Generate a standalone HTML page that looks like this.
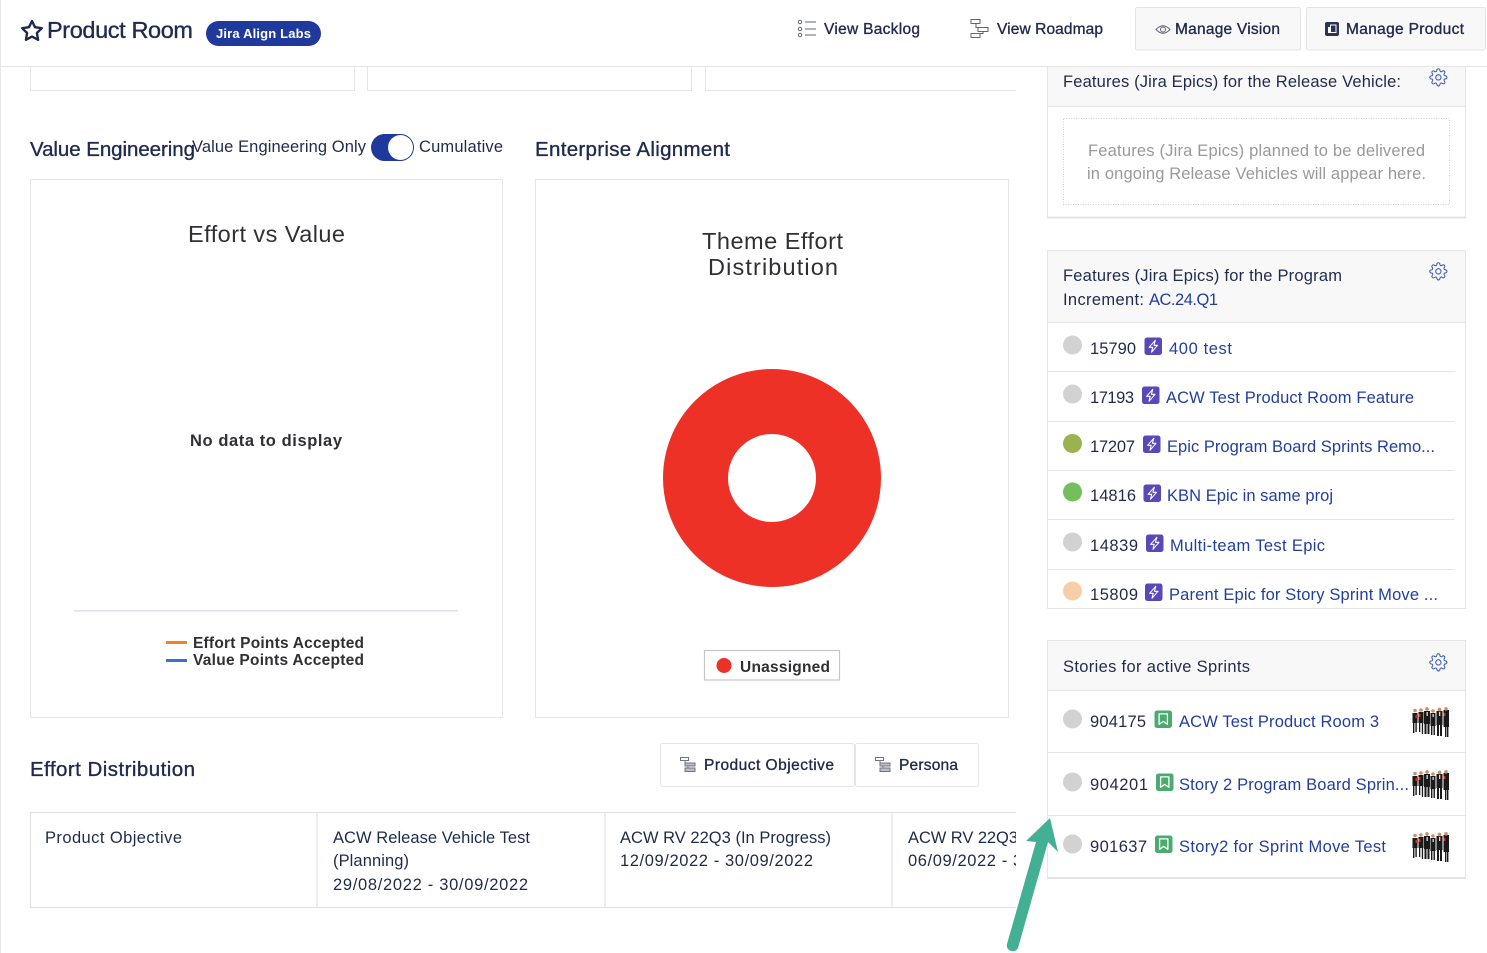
<!DOCTYPE html>
<html lang="en"><head><meta charset="utf-8"><title>Product Room</title>
<style>
html,body{margin:0;padding:0;background:#fff;width:1487px;height:953px;overflow:hidden}
svg{display:block}
text{font-family:"Liberation Sans",sans-serif;font-size:16.5px;fill:#1f2b4d;white-space:pre}
.l{fill:#213f9e}
.m{stroke:#1f2b4d;stroke-width:.35px}
.c{fill:#2f3033}
.b{font-weight:bold;fill:#2f3033;font-size:15px}
.g{fill:#999}
.ln{stroke:#e6e6e6;stroke-width:1;fill:none}
</style></head><body>
<svg xmlns="http://www.w3.org/2000/svg" width="1487" height="953" viewBox="0 0 1487 953">
<defs>
<g id="gear" fill="none" stroke="#3f5db5" stroke-width="1.35" transform="scale(.78)">
<circle cx="12" cy="12" r="3.4"/>
<path d="M19.4 15a1.65 1.65 0 0 0 .33 1.82l.06.06a2 2 0 0 1 0 2.83 2 2 0 0 1-2.83 0l-.06-.06a1.65 1.65 0 0 0-1.82-.33 1.65 1.65 0 0 0-1 1.51V21a2 2 0 0 1-2 2 2 2 0 0 1-2-2v-.09A1.65 1.65 0 0 0 9 19.4a1.65 1.65 0 0 0-1.82.33l-.06.06a2 2 0 0 1-2.83 0 2 2 0 0 1 0-2.83l.06-.06a1.65 1.65 0 0 0 .33-1.82 1.65 1.65 0 0 0-1.51-1H3a2 2 0 0 1-2-2 2 2 0 0 1 2-2h.09A1.65 1.65 0 0 0 4.6 9a1.65 1.65 0 0 0-.33-1.82l-.06-.06a2 2 0 0 1 0-2.83 2 2 0 0 1 2.83 0l.06.06a1.65 1.65 0 0 0 1.82.33H9a1.65 1.65 0 0 0 1-1.51V3a2 2 0 0 1 2-2 2 2 0 0 1 2 2v.09a1.65 1.65 0 0 0 1 1.51 1.65 1.65 0 0 0 1.82-.33l.06-.06a2 2 0 0 1 2.83 0 2 2 0 0 1 0 2.83l-.06.06a1.65 1.65 0 0 0-.33 1.82V9a1.65 1.65 0 0 0 1.51 1H21a2 2 0 0 1 2 2 2 2 0 0 1-2 2h-.09a1.65 1.65 0 0 0-1.51 1z"/>
</g>
<g id="epic"><rect width="17.5" height="17.5" rx="2.5" fill="#5a47b8"/><path d="M10.8 2.8 4.6 9.8h3.6L7 14.8 13 7.8H9.4z" fill="none" stroke="#fff" stroke-width="1.05" stroke-linejoin="round"/></g>
<g id="story"><rect width="17.5" height="17.5" rx="2.5" fill="#4bab6e"/><path d="M4.6 3.4h8.3v10.4l-4.15-2.9-4.15 2.9z" fill="none" stroke="#fff" stroke-width="1.3" stroke-linejoin="round"/></g>
<g id="hier" fill="none" stroke="#6f7686" stroke-width="1"><rect x=".5" y=".5" width="8" height="3" fill="#fff"/><path d="M5 3.5v4M5 7.5h3M5 12.5h3M8 5.5v9"/><rect x="5" y="6" width="10" height="3" fill="#b9bdc7"/><rect x="5" y="11" width="10" height="3.5" fill="#b9bdc7"/></g>
<g id="folk">
<g fill="#1a1a1a">
<rect x="0.500" y="6" width="5" height="10"/><rect x="1" y="16" width="1.400" height="10"/><rect x="3.400" y="16" width="1.400" height="9"/>
<rect x="6.500" y="5" width="5" height="11"/><rect x="7" y="16" width="1.300" height="9"/><rect x="9.800" y="16" width="1.300" height="11"/>
<rect x="12" y="4" width="6" height="13"/><rect x="12.500" y="17" width="2" height="10"/><rect x="15.500" y="17" width="2" height="10"/>
<rect x="18.500" y="6" width="5" height="13"/><rect x="19" y="19" width="1.400" height="9"/><rect x="21.500" y="19" width="1.400" height="9"/>
<rect x="24.500" y="4" width="6" height="14"/><rect x="25" y="18" width="2" height="11"/><rect x="28" y="18" width="2" height="11"/>
<rect x="31.500" y="3" width="5.500" height="17"/><rect x="33" y="20" width="1.400" height="10"/><rect x="35" y="20" width="1.400" height="10"/>
</g>
<g fill="#c99272"><circle cx="3" cy="3.500" r="1.800"/><circle cx="9" cy="3" r="1.800"/><circle cx="15" cy="2" r="1.900"/><circle cx="21" cy="4" r="1.800"/><circle cx="27.500" cy="2.500" r="1.900"/><circle cx="34" cy="1.800" r="1.800"/></g>
<g fill="#d92b20"><rect x="3.500" y="8" width="2.500" height="3"/><rect x="6.500" y="7" width="2" height="3"/><rect x="31.500" y="6" width="2" height="3"/></g>
<g fill="#ddd"><rect x="14.500" y="5" width="1.300" height="4"/><rect x="27" y="5" width="1.300" height="4"/><rect x="20.500" y="7" width="1.300" height="3"/></g>
</g>
</defs>

<!-- left edge -->
<rect x="0" y="0" width="1" height="953" fill="#e8e8e8"/>

<!-- stub cards -->
<rect x="30.500" y="60" width="324" height="30.500" class="ln"/>
<rect x="367.500" y="60" width="324" height="30.500" class="ln"/>
<path d="M705.500 60v30.500H1016" class="ln"/>

<!-- section headings -->
<text x="30" y="156" style="font-size:20.500px" textLength="165" class="m">Value Engineering</text>
<text x="192" y="152" textLength="174">Value Engineering Only</text>
<rect x="371" y="134" width="43" height="27" rx="13.500" fill="#20399c"/>
<circle cx="400.500" cy="147.500" r="12.500" fill="#fff"/>
<text x="419" y="152" textLength="84">Cumulative</text>
<text x="535" y="156" style="font-size:20.500px" textLength="195" class="m">Enterprise Alignment</text>

<!-- chart cards -->
<rect x="30.500" y="179.500" width="472" height="538" class="ln"/>
<rect x="535.500" y="179.500" width="473" height="538" class="ln"/>
<text x="188" y="242" class="c" style="font-size:23.500px" textLength="157">Effort vs Value</text>
<text x="190" y="446" class="b" style="font-size:16.500px" textLength="152">No data to display</text>
<rect x="74" y="610" width="384" height="1.500" fill="#d8e2ee"/>
<rect x="166" y="641" width="21" height="3" fill="#f47f25"/>
<rect x="166" y="659" width="21" height="3" fill="#3f6fd0"/>
<text x="193" y="648" class="b" style="font-size:15.500px" textLength="171">Effort Points Accepted</text>
<text x="193" y="665" class="b" style="font-size:15.500px" textLength="171">Value Points Accepted</text>

<text x="702" y="249" class="c" style="font-size:23.500px" textLength="141">Theme Effort</text>
<text x="708" y="275" class="c" style="font-size:23.500px" textLength="130">Distribution</text>
<circle cx="772" cy="478" r="76.500" fill="none" stroke="#ee3127" stroke-width="65"/>
<rect x="704.500" y="650.500" width="135" height="29.500" fill="#fff" stroke="#c6c6c6" stroke-width="1.200"/>
<circle cx="724" cy="665.500" r="7.500" fill="#ee3127"/>
<text x="740" y="672" class="b" style="font-size:15.500px" textLength="90">Unassigned</text>

<!-- effort distribution -->
<text x="30" y="776" style="font-size:20.500px" textLength="165" class="m">Effort Distribution</text>
<rect x="660.500" y="743.500" width="194" height="43" rx="2" fill="#fff" stroke="#e6e6e6"/>
<rect x="855.500" y="743.500" width="123" height="43" rx="2" fill="#fff" stroke="#e6e6e6"/>
<use href="#hier" x="680" y="757"/>
<use href="#hier" x="875" y="757"/>
<text x="704" y="770" class="m" style="font-size:15.500px" textLength="130">Product Objective</text>
<text x="899" y="770" class="m" style="font-size:15.500px" textLength="59">Persona</text>

<!-- table -->
<path d="M1016 812.500H30.500V907.500H1016M317 812v96M605 812v96M892 812v96" fill="none" stroke="#e3e3e3" stroke-width="1.200"/>
<text x="45" y="843" textLength="137">Product Objective</text>
<text x="333" y="843" textLength="197">ACW Release Vehicle Test</text>
<text x="333" y="866" textLength="76">(Planning)</text>
<text x="333" y="890" textLength="195">29/08/2022 - 30/09/2022</text>
<text x="620" y="843" textLength="211">ACW RV 22Q3 (In Progress)</text>
<text x="620" y="866" textLength="193">12/09/2022 - 30/09/2022</text>
<svg x="900" y="820" width="116" height="60" viewBox="900 820 116 60">
<text x="908" y="843" textLength="110">ACW RV 22Q3</text>
<text x="908" y="866" textLength="193">06/09/2022 - 30/09/2022</text>
</svg>

<!-- right panel 1 -->
<rect x="1047.500" y="60" width="418" height="158" fill="#fff" stroke="#e6e6e6"/>
<rect x="1048" y="60" width="417" height="46" fill="#f8f8f8"/>
<path d="M1048 106.500H1465" class="ln"/>
<path d="M1047 217.500H1466" stroke="#e3e3e3" stroke-width="2"/>
<text x="1063" y="87" textLength="338">Features (Jira Epics) for the Release Vehicle:</text>
<use href="#gear" x="1429" y="68"/>
<rect x="1063.500" y="118.500" width="386" height="86" fill="none" stroke="#cfcfcf" stroke-dasharray="1 1.500"/>
<text x="1088" y="156" class="g" textLength="337">Features (Jira Epics) planned to be delivered</text>
<text x="1087" y="179" class="g" textLength="339">in ongoing Release Vehicles will appear here.</text>

<!-- right panel 2 -->
<rect x="1047.500" y="250.500" width="418" height="358" fill="#fff" stroke="#e6e6e6"/>
<rect x="1048" y="251" width="417" height="71" fill="#f8f8f8"/>
<path d="M1048 322.500H1465M1048 371.500H1455M1048 421.500H1455M1048 470.500H1455M1048 519.500H1455M1048 569.500H1455" class="ln"/>
<text x="1063" y="281" textLength="279">Features (Jira Epics) for the Program</text>
<text x="1063" y="305" textLength="81">Increment:</text>
<text x="1149" y="305" class="l" textLength="69">AC.24.Q1</text>
<use href="#gear" x="1429" y="262"/>

<circle cx="1072.500" cy="345" r="9.500" fill="#d2d2d2"/>
<text x="1090" y="354" textLength="46">15790</text>
<use href="#epic" x="1144.500" y="337.500"/>
<text x="1169" y="354" class="l" textLength="63">400 test</text>

<circle cx="1072.500" cy="394" r="9.500" fill="#d2d2d2"/>
<text x="1090" y="403" textLength="44">17193</text>
<use href="#epic" x="1142" y="386.500"/>
<text x="1166" y="403" class="l" textLength="248">ACW Test Product Room Feature</text>

<circle cx="1072.500" cy="443.500" r="9.500" fill="#9ab34f"/>
<text x="1090" y="452" textLength="45">17207</text>
<use href="#epic" x="1143" y="435.500"/>
<text x="1167" y="452" class="l" textLength="268">Epic Program Board Sprints Remo...</text>

<circle cx="1072.500" cy="492" r="9.500" fill="#72bf5c"/>
<text x="1090" y="501" textLength="46">14816</text>
<use href="#epic" x="1143.500" y="484.500"/>
<text x="1167" y="501" class="l" textLength="166">KBN Epic in same proj</text>

<circle cx="1072.500" cy="542" r="9.500" fill="#d2d2d2"/>
<text x="1090" y="551" textLength="48">14839</text>
<use href="#epic" x="1146" y="534.500"/>
<text x="1170" y="551" class="l" textLength="155">Multi-team Test Epic</text>

<circle cx="1072.500" cy="591" r="9.500" fill="#f6cfa8"/>
<text x="1090" y="600" textLength="48">15809</text>
<use href="#epic" x="1145" y="583.500"/>
<text x="1169" y="600" class="l" textLength="269">Parent Epic for Story Sprint Move ...</text>

<!-- right panel 3 -->
<rect x="1047.500" y="640.500" width="418" height="237.500" fill="#fff" stroke="#e6e6e6"/>
<path d="M1047 878H1466" stroke="#e3e3e3" stroke-width="2"/>
<rect x="1048" y="641" width="417" height="49" fill="#f8f8f8"/>
<path d="M1048 690.500H1465M1048 752.500H1465M1048 815.500H1465" class="ln"/>
<text x="1063" y="672" textLength="187">Stories for active Sprints</text>
<use href="#gear" x="1429" y="653"/>

<circle cx="1072.500" cy="719" r="9.500" fill="#d2d2d2"/>
<text x="1090" y="727" textLength="56">904175</text>
<use href="#story" x="1154.500" y="710.500"/>
<text x="1179" y="727" class="l" textLength="200">ACW Test Product Room 3</text>
<use href="#folk" x="1412" y="707"/>

<circle cx="1072.500" cy="782" r="9.500" fill="#d2d2d2"/>
<text x="1090" y="790" textLength="58">904201</text>
<use href="#story" x="1156" y="773.500"/>
<text x="1179" y="790" class="l" textLength="230">Story 2 Program Board Sprin...</text>
<use href="#folk" x="1412" y="770"/>

<circle cx="1072.500" cy="844" r="9.500" fill="#d2d2d2"/>
<text x="1090" y="852" textLength="57">901637</text>
<use href="#story" x="1155" y="835.500"/>
<text x="1179" y="852" class="l" textLength="207">Story2 for Sprint Move Test</text>
<use href="#folk" x="1412" y="832"/>

<!-- header -->
<rect x="1" y="0" width="1486" height="66" fill="#fff"/>
<rect x="1" y="66" width="1486" height="1" fill="#e6e6e6"/>
<polygon points="32 21 35 27.200 41.800 28.200 36.900 33 38.100 39.800 32 36.600 25.900 39.800 27.100 33 22.200 28.200 29 27.200" fill="none" stroke="#1f2b4d" stroke-width="2.400" stroke-linejoin="round"/>
<text x="47" y="38" style="font-size:23.500px" class="m" textLength="146">Product Room</text>
<rect x="206" y="21" width="115" height="25" rx="12.500" fill="#20399c"/>
<text x="216" y="38" style="font-size:13px;font-weight:bold;fill:#fff" textLength="95">Jira Align Labs</text>

<g fill="none" stroke="#5f6678" stroke-width="1"><circle cx="800" cy="22" r="1.700"/><circle cx="800" cy="29" r="1.700"/><circle cx="800" cy="35" r="1.700"/><path d="M805 22h11M805 29h11M805 35h11"/></g>
<text x="824" y="34" class="m" style="font-size:15.500px" textLength="96">View Backlog</text>
<g fill="none" stroke="#5f6678" stroke-width="1"><rect x="971" y="19.500" width="9" height="4"/><rect x="978" y="27.500" width="10" height="4"/><rect x="971" y="33.500" width="9" height="4"/><path d="M976 23.500v4h2M983 31.500v2h-3"/></g>
<text x="997" y="34" class="m" style="font-size:15.500px" textLength="106">View Roadmap</text>

<rect x="1135.500" y="7.500" width="165" height="42.500" rx="2" fill="#f8f8f8" stroke="#e4e4e4"/>
<rect x="1306.500" y="7.500" width="179" height="42.500" rx="2" fill="#f8f8f8" stroke="#e4e4e4"/>
<g fill="none" stroke="#5f6678" stroke-width="1"><path d="M1156 29.500q7-7.500 14 0q-7 7.500-14 0z"/><circle cx="1163" cy="29.500" r="2.500"/></g>
<text x="1175" y="34" class="m" style="font-size:15.500px" textLength="105">Manage Vision</text>
<rect x="1325" y="22" width="14" height="14" rx="2" fill="#2b3553"/>
<rect x="1330.500" y="25" width="5.500" height="7.500" fill="none" stroke="#fff" stroke-width="1"/>
<rect x="1328" y="27" width="3" height="6" fill="#fff"/>
<text x="1346" y="34" class="m" style="font-size:15.500px" textLength="118">Manage Product</text>

<!-- teal arrow -->
<path d="M1050 818 1026 841 1036 842 1007 944Q1006 949 1011 951 1016 952 1018 948L1048 842 1058 852Z" fill="#43b094"/>
</svg>
</body></html>
